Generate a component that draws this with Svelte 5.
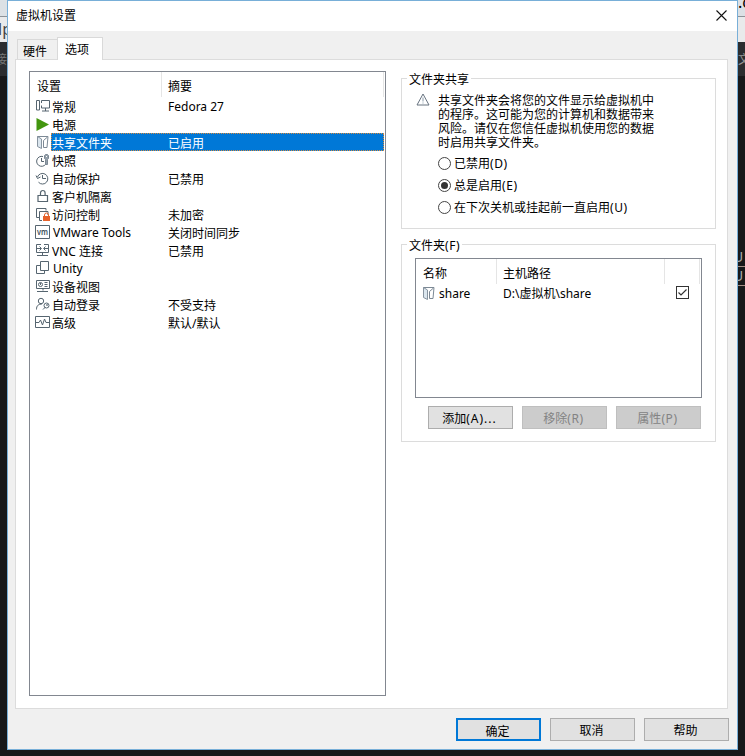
<script>
  const settings = [
    ['monitor', '常规', 'Fedora 27'],
    ['power', '电源', ''],
    ['folder', '共享文件夹', '已启用'],
    ['snapshot', '快照', ''],
    ['history', '自动保护', '已禁用'],
    ['lock', '客户机隔离', ''],
    ['access', '访问控制', '未加密'],
    ['vm', 'VMware Tools', '关闭时间同步'],
    ['vnc', 'VNC 连接', '已禁用'],
    ['unity', 'Unity', ''],
    ['view', '设备视图', ''],
    ['login', '自动登录', '不受支持'],
    ['advanced', '高级', '默认/默认']
  ];
  let selected = $state(2);
  let mode = $state(1);
  let shared = $state(true);
  const isLatin = (text) => /^[\x20-\x7e]+$/.test(text);
  const modes = [['已禁用', '(D)'], ['总是启用', '(E)'], ['在下次关机或挂起前一直启用', '(U)']];
  const notice = [
    '共享文件夹会将您的文件显示给虚拟机中',
    '的程序。这可能为您的计算机和数据带来',
    '风险。请仅在您信任虚拟机使用您的数据',
    '时启用共享文件夹。'
  ];
</script>

{#snippet icon(name)}
  <svg class="icon" width="16" height="16" viewBox="0 0 16 16" fill="none" stroke="#566570" stroke-width="1">
    {#if name === 'monitor'}
      <path d="M1.500 1.500h3v9.500h-3zM6.500 4V1.500h8V9H6.500V6.500M10.500 9v3M7 12h7" />
    {:else if name === 'power'}
      <path d="M1.500 1l12.500 6.500L1.500 14z" fill="#43960f" stroke="none" />
    {:else if name === 'folder'}
      <path d="M2.500 1.500l4 2.500v9.500l-4-2z" fill="#dbe6ee" stroke="#8794a0" />
      <path d="M2.500 1.500H13l-1 11H8.500V5.500l4-3.500" stroke="#7c8995" />
    {:else if name === 'snapshot'}
      <path d="M8 3.500A5 5 0 1 0 11.500 9.500M6.500 5v3.500H9" />
      <path d="M9.500 2.500l1-1h2l1 1v3l-1 1v5h-2v-5l-1-1z" fill="#95a0aa" stroke="#7c8995" />
      <path d="M11 3.500h1" stroke="#fff" />
    {:else if name === 'history'}
      <path d="M2.500 6a5.300 5.300 0 1 1 1 5.200M7.500 4v3.500h3.500M1 4.500l1.500 3 3-1.500" />
    {:else if name === 'lock'}
      <path d="M3 6.500h9.500v6H3zM5.500 6.500V4a2.300 2.500 0 0 1 4.600 0v2.500" stroke-width="1.200" />
    {:else if name === 'access'}
      <path d="M4 10.500H1.500v-9h9.500v2M7 13.500H4.500v-9H13V8" />
      <path d="M8 9h7v5H8z" fill="#e6622c" stroke="none" />
      <path d="M9.500 9V8a2 2 0 0 1 4 0v1" stroke="#e6622c" />
    {:else if name === 'vm'}
      <path d="M.500 .500h14v13H.500z" />
      <text x="2" y="9.500" fill="#44525e" stroke="none" font-size="8" font-weight="600" textLength="11" lengthAdjust="spacingAndGlyphs">vm</text>
    {:else if name === 'vnc'}
      <path d="M6 1.500H1.500v8h12v-8H9M7.500 9.500v2.500M2 12.500h11M1 5.500h5M14 5.500H9M4.500 3.500l2 2-2 2M10.500 3.500l-2 2 2 2" />
    {:else if name === 'unity'}
      <path d="M5.500 4.500h-4v8h8v-3M5.500 .500h8v9h-8z" />
    {:else if name === 'view'}
      <path d="M1.500 1.500h13v8h-13zM8 9.500v2M2 12.500h11M9.500 3.500h3M9.500 5.500h3M9.500 7.500h3M5.500 4v2" />
      <circle cx="5.500" cy="5.500" r="2" />
    {:else if name === 'login'}
      <circle cx="6" cy="4" r="2.700" />
      <path d="M1.500 12.500c0-4 2-5.500 5-5M8 12.500l2.500-2.500" />
      <circle cx="11.500" cy="8.500" r="2.500" />
      <circle cx="12" cy="8" r=".5" />
    {:else if name === 'advanced'}
      <path d="M.500 1.500h14v11H.500zM1 7.500h3l1.500-2.500 2 5 2-6 1.500 3.500h3" />
    {/if}
  </svg>
{/snippet}

<main class="desktop">
  <div class="behind left" aria-hidden="true">
    <div class="strip chrome"></div>
    <div class="strip menu">lp</div>
    <div class="strip tab">接</div>
  </div>
  <div class="behind right" aria-hidden="true">
    <div class="strip chrome"><span>.c</span></div>
    <div class="strip menu"></div>
    <div class="strip tab">文</div>
    <div class="console"><span>U</span><span>U</span></div>
  </div>

  <section class="window">
    <header class="title">
      <span>虚拟机设置</span>
      <svg width="11" height="11" viewBox="0 0 11 11" stroke="#111" stroke-width="1.100"><path d="M.500 .500l10 10M10.500 .500l-10 10" /></svg>
    </header>

    <nav class="tabs">
      <div class="hw">硬件</div>
      <div class="opt">选项</div>
    </nav>

    <div class="pane">
      <div class="list">
        <div class="head"><span class="h1">设置</span><span class="h2">摘要</span></div>
        {#each settings as [kind, label, summary], i}
          <!-- svelte-ignore a11y_click_events_have_key_events, a11y_no_static_element_interactions -->
          <div class="row" class:selected={selected === i} onclick={() => (selected = i)}>
            {@render icon(kind)}
            <div class="cells">
              <span class="name" class:latin={isLatin(label)}>{label}</span>
              <span class:latin={isLatin(summary)}>{summary}</span>
            </div>
          </div>
        {/each}
      </div>

      <div class="side">
        <fieldset class="group sharing">
          <legend>文件夹共享</legend>
          <div class="notice">
            <svg width="14" height="13" viewBox="0 0 14 13" fill="none" stroke="#66727f"><path d="M7 1L13 12H1z" /><path d="M7 4.500v4M7 9.500v1" stroke="#8b9cab" /></svg>
            <div class="lines">{#each notice as line}<p>{line}</p>{/each}</div>
          </div>
          {#each modes as [text, key], i}
            <!-- svelte-ignore a11y_click_events_have_key_events, a11y_no_static_element_interactions -->
            <div class="radio" onclick={() => (mode = i)}>
              <i class:on={mode === i}></i><span>{text}<b>{key}</b></span>
            </div>
          {/each}
        </fieldset>

        <fieldset class="group folders">
          <legend>文件夹<b>(F)</b></legend>
          <div class="table">
            <div class="thead"><span>名称</span><span>主机路径</span><span></span></div>
            <div class="trow">
              {@render icon('folder')}
              <span class="fname">share</span>
              <span class="path">D:\虚拟机\share</span>
              <!-- svelte-ignore a11y_click_events_have_key_events, a11y_no_static_element_interactions -->
              <div class="check" onclick={() => (shared = !shared)}>
                {#if shared}<svg width="11" height="11" viewBox="0 0 11 11" fill="none" stroke="#333" stroke-width="1.200"><path d="M1.500 5.500l2.500 2.500L9.500 2.500" /></svg>{/if}
              </div>
            </div>
          </div>
          <div class="actions">
            <button>添加<b class="dots">(A)...</b></button>
            <button disabled>移除<b>(R)</b></button>
            <button disabled>属性<b>(P)</b></button>
          </div>
        </fieldset>
      </div>
    </div>

    <footer>
      <button class="primary">确定</button>
      <button>取消</button>
      <button>帮助</button>
    </footer>
  </section>
</main>

<style>
  .desktop, .desktop * { box-sizing: border-box; }
  .desktop {
    position: relative; width: 745px; height: 756px; overflow: hidden; background: #17181a;
    font: 12px/18px "Noto Sans", "Noto Sans CJK SC", sans-serif; color: #000; white-space: nowrap;
  }
  b { font-weight: normal; letter-spacing: .6px; }
  .dots { letter-spacing: 1px; }
  .behind { position: absolute; top: 0; width: 8px; height: 756px; overflow: hidden; }
  .left { left: 0; }
  .right { left: 737px; }
  .strip { overflow: hidden; }
  .chrome { height: 17px; background: #dce1e5; border-bottom: 1px solid #8c9297; }
  .right .chrome { font-size: 16px; line-height: 4px; text-indent: 1px; }
  .menu { height: 25px; background: #e9eaeb; color: #444; font-size: 16px; line-height: 24px; text-indent: -2px; }
  .tab { height: 34px; background: #2b2d30; color: #777; line-height: 36px; text-indent: -5px; }
  .right .tab { text-indent: 1px; color: #999; }
  .console { margin-top: 172px; color: #aaa; font-size: 14px; text-indent: -4px; }
  .console span { display: block; height: 19px; line-height: 18px; border-bottom: 1px solid #a58e85; }

  .window {
    position: absolute; left: 7px; top: 0; width: 731px; height: 750px;
    border: 1px solid #78afd8; background: #f0f0f0; display: flex; flex-direction: column;
  }
  .title { height: 30px; background: #fff; display: flex; justify-content: space-between; align-items: center; padding: 0 10px 1px 8px; }
  .title span { padding-top: 1px; }
  .tabs { display: flex; align-items: flex-end; height: 29px; padding-left: 9px; margin-bottom: -1px; z-index: 1; }
  .tabs div { border: 1px solid #d9d9d9; border-bottom: 0; }
  .tabs .hw { width: 40px; height: 20px; margin-bottom: 1px; padding: 3px 0 0 5px; line-height: 17px; border-right: 0; }
  .tabs .opt { width: 46px; height: 23px; background: #fff; padding: 3px 0 0 7px; }
  .pane { width: 713px; height: 650px; margin-left: 7px; background: #fff; border: 1px solid #dcdcdc; padding: 11px 0 0 13px; display: flex; gap: 15px; }
  .list { width: 357px; height: 625px; border: 1px solid #828790; }
  .head { display: flex; height: 25px; line-height: 30px; }
  .h1 { width: 132px; padding-left: 7px; border-right: 1px solid #e5e5e5; }
  .h2 { flex: 1; padding-left: 6px; margin-right: 1px; border-right: 1px solid #e5e5e5; }
  .row { display: flex; height: 18px; padding: 0 1px 0 5px; }
  .icon { flex: none; margin-top: 2px; }
  .cells { flex: 1; display: flex; padding-left: 1px; line-height: 21px; }
  .cells .latin { line-height: 19px; }
  .name { width: 116px; flex: none; }
  .name.latin { padding-left: 1px; }
  .selected .cells { background: #0078d7; color: #fff; outline: 1px dotted #d58b42; outline-offset: -1px; }

  .group { margin: 0; border: 1px solid #dcdcdc; padding: 0; min-width: 0; width: 315px; }
  legend { height: 14px; line-height: 18px; padding: 0 2px; margin-left: 5px; }
  .sharing { height: 158px; }
  .folders { height: 205px; margin-top: 8px; }
  .notice { display: flex; gap: 8px; padding-left: 14px; margin-top: 7px; height: 60px; }
  .notice svg { margin-top: 1px; }
  .lines { padding-top: 2px; }
  p { margin: 0; line-height: 14px; height: 14px; }
  .radio { height: 22px; display: flex; align-items: center; padding-left: 36px; }
  .radio span { padding-top: 2px; }
  .radio i { width: 13px; height: 13px; border: 1px solid #444; border-radius: 50%; display: flex; align-items: center; justify-content: center; margin-right: 3px; }
  .radio i.on::after { content: ""; width: 7px; height: 7px; border-radius: 50%; background: #333; }
  .table { width: 287px; height: 140px; margin: 7px 0 0 13px; border: 1px solid #828790; }
  .thead { display: flex; height: 25px; line-height: 30px; }
  .thead span { border-right: 1px solid #e5e5e5; padding-left: 7px; }
  .thead span:nth-child(1) { width: 81px; }
  .thead span:nth-child(2) { width: 168px; padding-left: 6px; }
  .thead span:nth-child(3) { width: 35px; }
  .trow { display: flex; height: 18px; padding-left: 5px; line-height: 19px; }
  .fname { width: 64px; padding-left: 2px; }
  .path { width: 175px; padding-left: 2px; }
  .check { width: 13px; height: 13px; border: 1px solid #333; margin-top: 2px; display: flex; }
  .actions { display: flex; gap: 9px; margin: 8px 0 0 26px; }
  button { width: 85px; height: 23px; padding: 2px 2px 0 0; font: inherit; line-height: 19px; color: #000; background: #e1e1e1; border: 1px solid #adadad; }
  button:disabled { background: #ccc; border-color: #bfbfbf; color: #838383; }
  .primary { border: 2px solid #0078d7; }
  footer { display: flex; justify-content: flex-end; gap: 9px; padding: 9px 8px 0 0; }
</style>
